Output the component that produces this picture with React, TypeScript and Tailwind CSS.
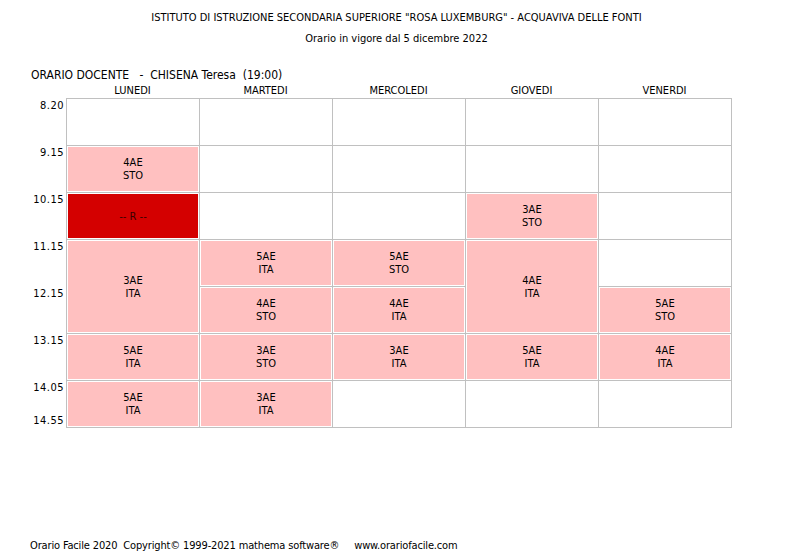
import React from "react";

type Cell = { r: number; c: number; span?: number; a?: string; b?: string; red?: boolean };

const cells: Cell[] = [
  { r: 2, c: 1, a: "4AE", b: "STO" },
  { r: 3, c: 1, red: true },
  { r: 4, c: 1, span: 2, a: "3AE", b: "ITA" },
  { r: 6, c: 1, a: "5AE", b: "ITA" },
  { r: 7, c: 1, a: "5AE", b: "ITA" },
  { r: 4, c: 2, a: "5AE", b: "ITA" },
  { r: 5, c: 2, a: "4AE", b: "STO" },
  { r: 6, c: 2, a: "3AE", b: "STO" },
  { r: 7, c: 2, a: "3AE", b: "ITA" },
  { r: 4, c: 3, a: "5AE", b: "STO" },
  { r: 5, c: 3, a: "4AE", b: "ITA" },
  { r: 6, c: 3, a: "3AE", b: "ITA" },
  { r: 3, c: 4, a: "3AE", b: "STO" },
  { r: 4, c: 4, span: 2, a: "4AE", b: "ITA" },
  { r: 6, c: 4, a: "5AE", b: "ITA" },
  { r: 5, c: 5, a: "5AE", b: "STO" },
  { r: 6, c: 5, a: "4AE", b: "ITA" },
];

const occupied = new Set<string>();
cells.forEach((c) => {
  for (let i = 0; i < (c.span || 1); i++) occupied.add(`${c.r + i}-${c.c}`);
});
const empties: { r: number; c: number }[] = [];
for (let r = 1; r <= 7; r++) for (let c = 1; c <= 5; c++) if (!occupied.has(`${r}-${c}`)) empties.push({ r, c });

const days = ["LUNEDI", "MARTEDI", "MERCOLEDI", "GIOVEDI", "VENERDI"];
const times = ["8.20", "9.15", "10.15", "11.15", "12.15", "13.15", "14.05"];

export default function App() {
  return (
    <div
      className="w-[793px] h-[559px] bg-white text-black flex flex-col text-[11px] leading-[13px]"
      style={{ fontFamily: '"DejaVu Sans Condensed", "Liberation Sans", sans-serif' }}
    >
      <div className="pt-[11px] text-center">ISTITUTO DI ISTRUZIONE SECONDARIA SUPERIORE "ROSA LUXEMBURG" - ACQUAVIVA DELLE FONTI</div>
      <div className="pt-[8px] text-center">Orario in vigore dal 5 dicembre 2022</div>
      <div className="pt-[23px] pl-[31px] text-[12px] leading-[14px]">ORARIO DOCENTE &nbsp; - &nbsp;CHISENA Teresa &nbsp;(19:00)</div>
      <div className="flex pl-[66px] pt-[2px]">
        {days.map((d) => (
          <div key={d} className="w-[133px] text-center">{d}</div>
        ))}
      </div>
      <div className="flex mt-[1px]">
        <div className="w-[66px] flex flex-col pt-px">
          {times.map((t) => (
            <div key={t} className="h-[47px] pr-[2px] text-right tracking-[0.5px]">{t}</div>
          ))}
          <div className="-mt-[14px] pr-[2px] text-right tracking-[0.5px]">14.55</div>
        </div>
        <div className="grid grid-cols-[repeat(5,133px)] grid-rows-[repeat(7,47px)] border-l border-t border-[#c0c0c0] self-start">
          {empties.map((e) => (
            <div
              key={`e${e.r}-${e.c}`}
              className="border-r border-b border-[#c0c0c0]"
              style={{ gridRow: e.r, gridColumn: e.c }}
            />
          ))}
          {cells.map((c) => (
            <div
              key={`c${c.r}-${c.c}`}
              className="border-r border-b border-[#c0c0c0] p-px"
              style={{ gridRow: `${c.r} / span ${c.span || 1}`, gridColumn: c.c }}
            >
              {c.red ? (
                <div className="h-full bg-[#d40000] flex items-center justify-center text-[#3a0000]">-- R --</div>
              ) : (
                <div className="h-full bg-[#ffc0c0] flex flex-col items-center justify-center">
                  <div>{c.a}</div>
                  <div>{c.b}</div>
                </div>
              )}
            </div>
          ))}
        </div>
      </div>
      <div className="mt-auto mb-[7px] pl-[30px] whitespace-pre tracking-[-0.15px]">
        {"Orario Facile 2020  Copyright© 1999-2021 mathema software®     www.orariofacile.com"}
      </div>
    </div>
  );
}
